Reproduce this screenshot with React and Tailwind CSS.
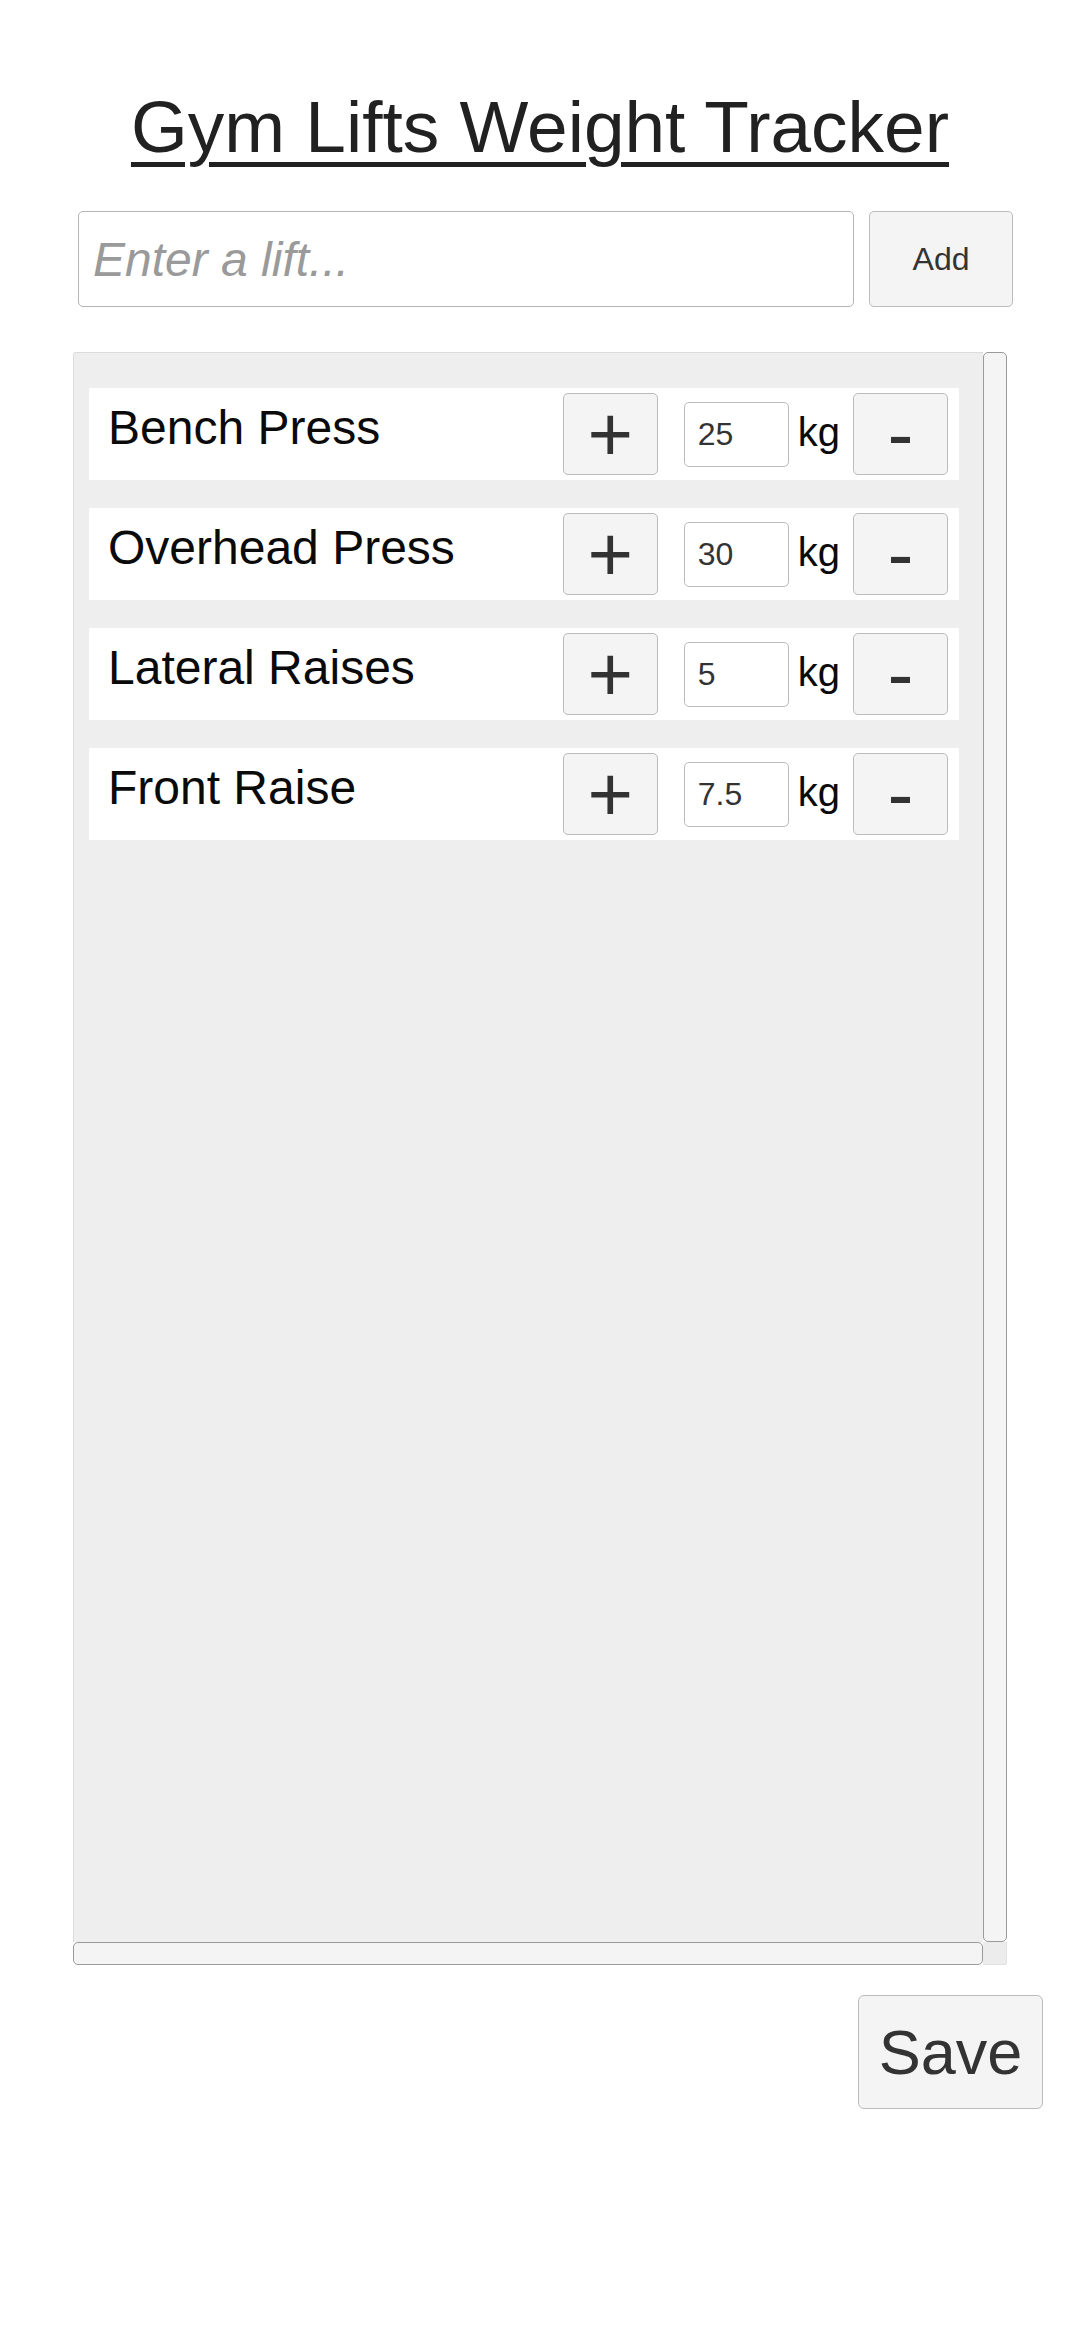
export default function App() {
  const lifts = [
    ["Bench Press", "25"],
    ["Overhead Press", "30"],
    ["Lateral Raises", "5"],
    ["Front Raise", "7.5"],
  ];
  return (
    <div className="w-[1080px] min-h-[2340px] bg-white font-['Liberation_Sans',Arial,sans-serif]">
      <h1 className="pt-[86px] text-center text-[73px] leading-[82px] font-normal text-[#212121] underline decoration-[5px] underline-offset-[10px]">
        Gym Lifts Weight Tracker
      </h1>
      <div className="mt-[43px] ml-[78px] flex gap-[15px]">
        <input
          placeholder="Enter a lift..."
          className="w-[776px] h-[96px] border border-[#b5b5b5] rounded-[5px] bg-white pl-[14px] text-[48px] text-[#111] outline-none placeholder:italic placeholder:text-[#9a9a9a]"
        />
        <button className="w-[144px] h-[96px] border border-[#bbbbbb] rounded-[5px] bg-[#f4f4f4] text-[32px] text-[#333]">
          Add
        </button>
      </div>

      <div className="mt-[45px] ml-[73px] w-[934px] h-[1613px] grid grid-cols-[910px_24px] grid-rows-[1590px_23px]">
        <div className="bg-[#eeeeee] border-t border-l border-[#dcdcdc] rounded-tl-[3px] pt-[35px] pl-[15px] flex flex-col gap-[28px]">
          {lifts.map(([name, val]) => (
            <div key={name} className="flex items-center h-[92px] w-[870px] bg-white pl-[19px] pr-[11px]">
              <div className="flex-1 self-start pt-[12px] text-[48px] leading-[55px] text-[#0a0a0a]">{name}</div>
              <button className="w-[95px] h-[82px] flex items-center justify-center border border-[#bbbbbb] rounded-[5px] bg-[#f4f4f4] text-[78px] leading-none text-[#333]">
                +
              </button>
              <input
                defaultValue={val}
                className="ml-[26px] w-[105px] h-[65px] border border-[#bbbbbb] rounded-[5px] bg-white pl-[13px] text-[32px] text-[#333] outline-none"
              />
              <span className="ml-[9px] mb-[4px] text-[40px] leading-[46px] text-[#0a0a0a]">kg</span>
              <button className="ml-[13px] w-[95px] h-[82px] flex items-center justify-center border border-[#bbbbbb] rounded-[5px] bg-[#f4f4f4] text-[78px] leading-none text-[#333]">
                -
              </button>
            </div>
          ))}
        </div>
        <div className="bg-[#f4f4f4] border border-[#9a9a9a] rounded-[5px]"></div>
        <div className="bg-[#f4f4f4] border border-[#9a9a9a] rounded-[5px]"></div>
        <div className="bg-[#ececec] border-r border-b border-[#e0e0e0] rounded-br-[3px]"></div>
      </div>

      <button className="block mt-[30px] ml-[858px] w-[185px] h-[114px] border border-[#bbbbbb] rounded-[6px] bg-[#f4f4f4] text-[63px] text-[#333]">
        Save
      </button>
    </div>
  );
}
